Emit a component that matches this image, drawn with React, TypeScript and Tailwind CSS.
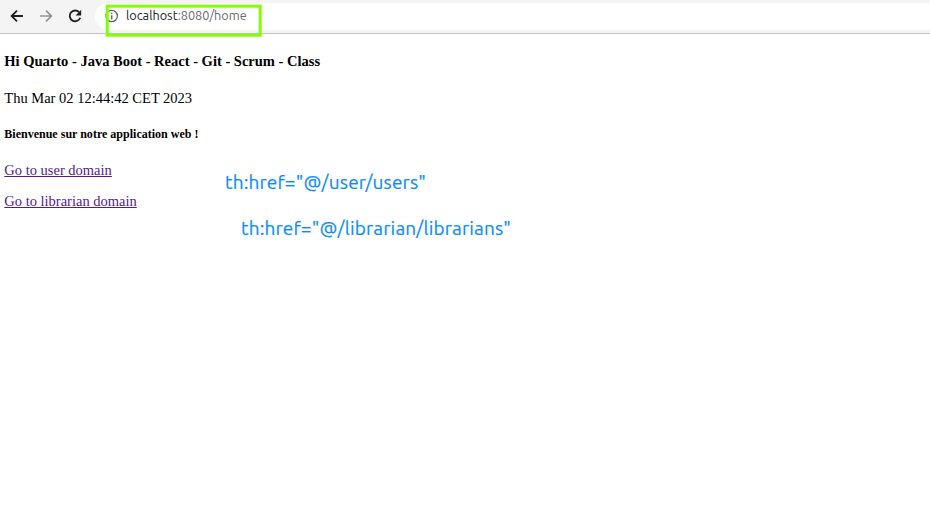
import React from "react";

function BackIcon() {
  return (
    <svg className="block h-4 w-4" viewBox="0 0 16 16" fill="none" stroke="#202124" strokeWidth="1.8">
      <path d="M14 8H2.8M8 2.6L2.6 8L8 13.4" />
    </svg>
  );
}

function ForwardIcon() {
  return (
    <svg className="block h-4 w-4" viewBox="0 0 16 16" fill="none" stroke="#929292" strokeWidth="1.7">
      <path d="M2 8H13.2M8 2.6L13.4 8L8 13.4" />
    </svg>
  );
}

function ReloadIcon() {
  return (
    <svg className="block h-4 w-4" viewBox="0 0 16 16" fill="none">
      <path d="M12.1 4.2A5.4 5.4 0 1 0 13.2 9.7" stroke="#202124" strokeWidth="1.9" />
      <path d="M14.2 1.8V7.4H8.6Z" fill="#202124" />
    </svg>
  );
}

function InfoIcon() {
  return (
    <svg className="block h-3.5 w-3.5" viewBox="0 0 14 14" fill="none">
      <circle cx="6.7" cy="7" r="5.7" stroke="#5f6368" strokeWidth="1.3" />
      <path d="M6.7 6.2V10.2M6.7 3.6V5" stroke="#5f6368" strokeWidth="1.4" />
    </svg>
  );
}

function Toolbar() {
  return (
    <header className="flex h-[34px] border-b border-[#c2c2c2] bg-[#f4f4f4]">
      <nav className="flex w-[95px] shrink-0 gap-[13px] pl-[9px] pt-2">
        <BackIcon />
        <ForwardIcon />
        <ReloadIcon />
      </nav>
      <div className="mt-[3px] flex h-[27px] flex-1 rounded-l-full bg-white pl-[10px]">
        <span className="mt-[6px]"><InfoIcon /></span>
        <span className="ml-[7px] whitespace-nowrap font-['Ubuntu','Noto_Sans',sans-serif] text-[12.7px] leading-[25px] text-[#666a6e]">
          <span className="text-[#202124]">localhost</span>:8080/home
        </span>
      </div>
    </header>
  );
}

export default function App() {
  return (
    <div className="relative h-[526px] w-[930px] overflow-hidden bg-white">
      <Toolbar />
      <main className="flex flex-col items-start whitespace-nowrap pl-[4.3px] pt-[18px] font-['Liberation_Serif',serif] text-[14.5px] leading-[18px] text-black">
        <h1 className="font-bold">Hi Quarto - Java Boot - React - Git - Scrum - Class</h1>
        <p className="mt-[19px]">Thu Mar 02 12:44:42 CET 2023</p>
        <h2 className="mt-[18px] text-[12.03px] font-bold">Bienvenue sur notre application web !</h2>
        <a className="mt-[18px] text-[#551a8b] underline">Go to user domain</a>
        <a className="mt-[13px] text-[#551a8b] underline">Go to librarian domain</a>
      </main>
      <svg className="absolute left-[104px] top-[3px]" width="160" height="36" fill="none">
        <rect x="3.2" y="3.2" width="153" height="29" stroke="#80ff00" strokeWidth="3" />
      </svg>
      <div className="absolute left-[225px] top-[170px] whitespace-nowrap font-['Ubuntu','Noto_Sans',sans-serif] text-[19px] leading-6 tracking-[0.16px] text-[#0c8cfa] [-webkit-text-stroke:0.2px_#0c8cfa]">
        th:href="@/user/users"
      </div>
      <div className="absolute left-[241px] top-[216px] whitespace-nowrap font-['Ubuntu','Noto_Sans',sans-serif] text-[19px] leading-6 tracking-[0.16px] text-[#0c8cfa] [-webkit-text-stroke:0.2px_#0c8cfa]">
        th:href="@/librarian/librarians"
      </div>
    </div>
  );
}
